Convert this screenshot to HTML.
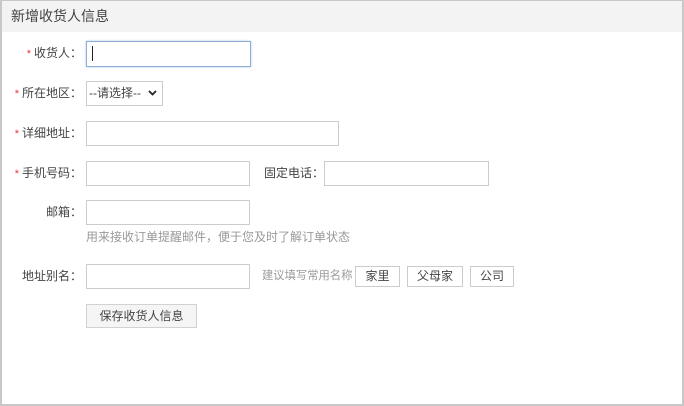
<!DOCTYPE html>
<html><head><meta charset="utf-8"><style>
*{margin:0;padding:0;box-sizing:border-box}
body{width:684px;height:406px;background:#fff;font-family:"Liberation Sans","Noto Sans CJK SC",sans-serif;font-size:12px;color:#444;position:relative;overflow:hidden}
.frame{position:absolute;left:0;top:0;width:684px;height:406px;border:2px solid #c8c8c8;border-top-width:1px}
.hd{position:absolute;left:2px;top:1px;width:680px;height:31px;background:#f3f3f3;font-size:14px;line-height:31px;padding-left:9px;color:#444}
.a{position:absolute;white-space:nowrap}
.lbl{position:absolute;right:602px;line-height:16px;white-space:nowrap}
.lbl i{color:#e4393c;font-style:normal;font-size:11px;margin-right:3px}
.in{position:absolute;border:1px solid #ccc;background:#fff}
.btn{position:absolute;border:1px solid #ccc;background:#fff;text-align:center;line-height:18px;color:#444}
</style></head><body>
<div class="frame"></div>
<div class="hd">新增收货人信息</div>

<div class="lbl" style="top:45px"><i>*</i>收货人：</div>
<div class="in" style="left:86px;top:41px;width:165px;height:26px;border-color:#8eaed3;box-shadow:0 0 2px #a9c3e3"></div>
<div class="a" style="left:92px;top:46px;width:1px;height:15px;background:#222"></div>

<div class="lbl" style="top:85px"><i>*</i>所在地区：</div>
<div class="in" style="left:86px;top:81px;width:77px;height:25px"></div>
<div class="a" style="left:89px;top:85px;line-height:16px">--请选择--</div>
<svg class="a" style="left:148px;top:89px" width="9" height="8" viewBox="0 0 9 8"><path d="M1 2L4.5 5.5L8 2" stroke="#222" stroke-width="1.8" fill="none"/></svg>

<div class="lbl" style="top:125px"><i>*</i>详细地址：</div>
<div class="in" style="left:86px;top:121px;width:253px;height:25px"></div>

<div class="lbl" style="top:165px"><i>*</i>手机号码：</div>
<div class="in" style="left:86px;top:161px;width:164px;height:25px"></div>
<div class="a" style="left:264px;top:165px;line-height:16px">固定电话：</div>
<div class="in" style="left:324px;top:161px;width:165px;height:25px"></div>

<div class="lbl" style="top:204px">邮箱：</div>
<div class="in" style="left:86px;top:200px;width:164px;height:25px"></div>
<div class="a" style="left:86px;top:229px;line-height:16px;color:#999">用来接收订单提醒邮件，便于您及时了解订单状态</div>

<div class="lbl" style="top:268px">地址别名：</div>
<div class="in" style="left:86px;top:264px;width:164px;height:25px"></div>
<div class="a" style="left:262px;top:268px;line-height:16px;color:#999;font-size:11.3px">建议填写常用名称</div>
<div class="btn" style="left:355px;top:266px;width:45px;height:21px">家里</div>
<div class="btn" style="left:407px;top:266px;width:56px;height:21px">父母家</div>
<div class="btn" style="left:470px;top:266px;width:44px;height:21px">公司</div>

<div class="btn" style="left:86px;top:304px;width:111px;height:24px;line-height:22px;background:#f5f5f5;border-color:#d2d2d2">保存收货人信息</div>
</body></html>
